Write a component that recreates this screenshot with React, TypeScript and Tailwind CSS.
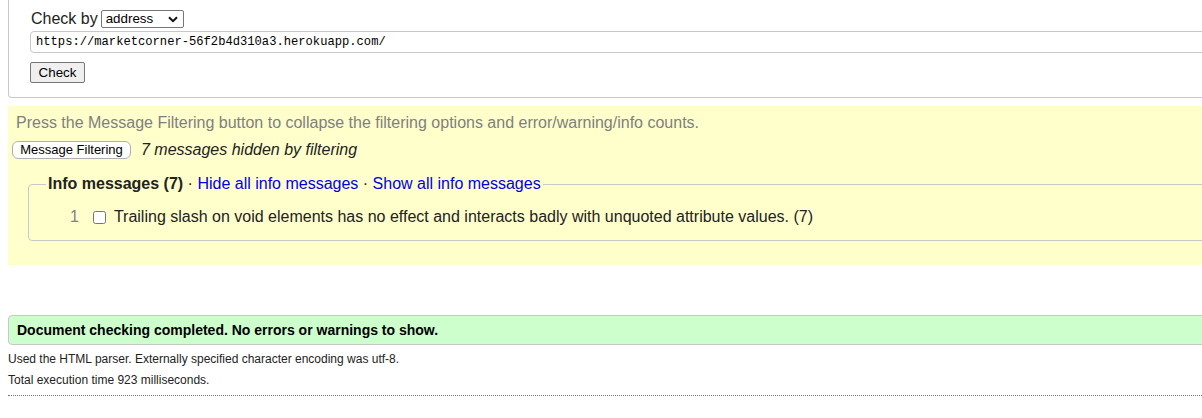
export default function App() {
  return (
    <div className="w-[1202px] h-[418px] overflow-hidden bg-white text-[#222] font-['Liberation_Sans',Arial,sans-serif]">
      {/* Check form */}
      <div className="ml-2 w-[1300px] h-[98px] border-l border-b border-[#c8c8c8] rounded-bl-[4px] pt-[10px] pl-[21px]">
        <div className="flex items-center h-[18px]">
          <span className="text-[16px] leading-[18px] ml-[1px]">Check by</span>
          <div className="ml-[3px] relative w-[83px] h-[18px] border border-[#767676] rounded-[2px] bg-white flex items-center">
            <span className="pl-[4px] text-[13.33px] leading-[16px] text-black">address</span>
            <svg className="absolute right-[5px] top-[5px]" width="10" height="7" viewBox="0 0 10 7">
              <path d="M1 1.2 L5 5.2 L9 1.2" fill="none" stroke="#111" strokeWidth="2" />
            </svg>
          </div>
        </div>
        <div className="mt-[3px] w-[1300px] h-[22px] border border-[#c8c8c8] rounded-[4px] bg-white flex items-center pl-[5px]">
          <span className="font-['Liberation_Mono',monospace] text-[12.15px] leading-[16px] text-black">
            https://marketcorner-56f2b4d310a3.herokuapp.com/
          </span>
        </div>
        <button className="mt-[9px] w-[55px] h-[21px] border border-[#767676] rounded-[2px] bg-[#efefef] text-[13.33px] leading-[16px] text-black">
          Check
        </button>
      </div>

      {/* Message filtering */}
      <div className="mt-2 ml-2 w-[1300px] bg-[#ffffcc] pt-[8px] pb-[24px]">
        <p className="pl-[8px] text-[16px] leading-[18px] text-[#808080]">
          Press the Message Filtering button to collapse the filtering options and error/warning/info counts.
        </p>
        <div className="mt-[9px] flex items-center h-[18px]">
          <button className="ml-[4px] w-[119px] h-[18px] border border-[#b0b0b0] rounded-[6px] bg-white text-[13px] leading-[14px] text-black">
            Message Filtering
          </button>
          <span className="ml-[10px] text-[16px] leading-[18px] italic">7 messages hidden by filtering</span>
        </div>
        <fieldset className="mt-[16px] ml-[20px] w-[1300px] border border-[#c8c8c8] rounded-[4px] pt-[15px] pb-[14px]">
          <legend className="ml-[17px] px-[2px] text-[16px] leading-[18px]">
            <span className="font-bold">Info messages (7)</span>
            <span> · </span>
            <a className="text-[#0000ee]">Hide all info messages</a>
            <span> · </span>
            <a className="text-[#0000ee]">Show all info messages</a>
          </legend>
          <div className="flex items-center h-[18px] pl-[41px]">
            <span className="text-[16px] leading-[18px] text-[#808080]">1</span>
            <input type="checkbox" className="ml-[14px] w-[13px] h-[13px] m-0" />
            <span className="ml-[8px] text-[16px] leading-[18px]">
              Trailing slash on void elements has no effect and interacts badly with unquoted attribute values. (7)
            </span>
          </div>
        </fieldset>
      </div>

      {/* Result */}
      <div className="mt-[50px] ml-2 w-[1300px] h-[30px] border border-[#c8c8c8] rounded-l-[4px] bg-[#ccffcc] pl-[8px] flex items-center">
        <span className="font-bold text-[14px] leading-[16px] text-black">
          Document checking completed. No errors or warnings to show.
        </span>
      </div>
      <p className="mt-[7px] ml-2 text-[12px] leading-[14px]">
        Used the HTML parser. Externally specified character encoding was utf-8.
      </p>
      <p className="mt-[7px] ml-2 text-[12px] leading-[14px]">Total execution time 923 milliseconds.</p>
      <div className="mt-[8px] ml-2 w-[1300px] border-t border-dotted border-[#777]" />
    </div>
  );
}
